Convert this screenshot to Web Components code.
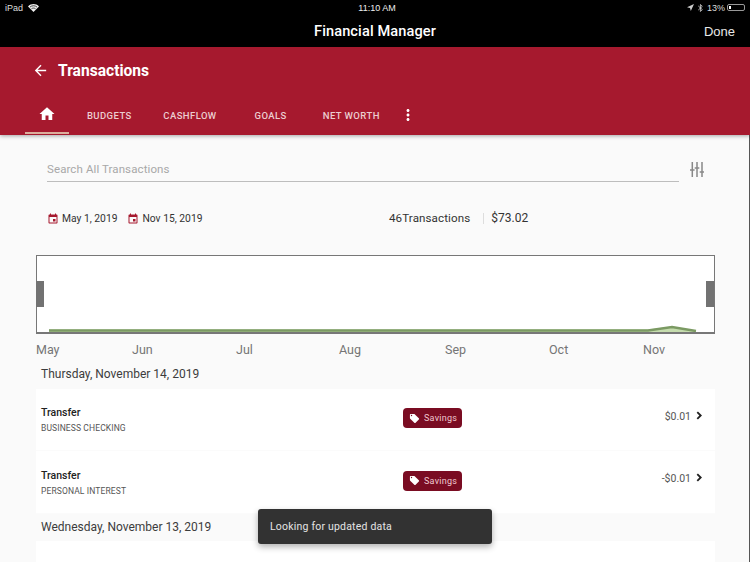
<!DOCTYPE html>
<html>
<head>
<meta charset="utf-8">
<title>Financial Manager</title>
<style>
  html, body { margin: 0; height: 562px; overflow: hidden; background: #fafafa; }
  body { font-family: Roboto, "Liberation Sans", sans-serif; position: relative; }
</style>
</head>
<body>
<ios-bar></ios-bar>
<app-header title="Transactions"></app-header>
<main-view>
  <search-row></search-row>
  <summary-row></summary-row>
  <range-chart></range-chart>
  <day-group label="Thursday, November 14, 2019">
    <txn-row name="Transfer" account="BUSINESS CHECKING" amount="$0.01" tag="Savings"></txn-row>
    <txn-row name="Transfer" account="PERSONAL INTEREST" amount="-$0.01" tag="Savings"></txn-row>
  </day-group>
  <day-group label="Wednesday, November 13, 2019">
    <txn-row></txn-row>
  </day-group>
</main-view>
<toast-msg>Looking for updated data</toast-msg>

<script>
const ICONS = {
  home: 'M10 20v-6h4v6h5v-8h3L12 3 2 12h3v8z',
  back: 'M20 11H7.83l5.59-5.59L12 4l-8 8 8 8 1.41-1.41L7.83 13H20v-2z',
  more: 'M12 8c1.1 0 2-.9 2-2s-.9-2-2-2-2 .9-2 2 .9 2 2 2zm0 2c-1.1 0-2 .9-2 2s.9 2 2 2 2-.9 2-2-.9-2-2-2zm0 6c-1.1 0-2 .9-2 2s.9 2 2 2 2-.9 2-2-.9-2-2-2z',
  event: 'M17 12h-5v5h5v-5zM16 1v2H8V1H6v2H5c-1.11 0-1.99.9-1.99 2L3 19c0 1.1.89 2 2 2h14c1.1 0 2-.9 2-2V5c0-1.1-.9-2-2-2h-1V1h-2zm3 18H5V8h14v11z',
  tag: 'M21.41 11.58l-9-9C12.05 2.22 11.55 2 11 2H4c-1.1 0-2 .9-2 2v7c0 .55.22 1.05.59 1.42l9 9c.36.36.86.58 1.41.58.55 0 1.05-.22 1.41-.59l7-7c.37-.36.59-.86.59-1.41 0-.55-.23-1.06-.59-1.42zM5.5 7C4.67 7 4 6.33 4 5.5S4.67 4 5.5 4 7 4.67 7 5.5 6.33 7 5.5 7z',
  chevron: 'M9.5 5.5L7.4 7.6 11.8 12l-4.4 4.4 2.1 2.1L16 12z'
};
const icon = (name, size, color) =>
  `<svg width="${size}" height="${size}" viewBox="0 0 24 24" fill="${color}" style="display:block;flex:none"><path d="${ICONS[name]}"/></svg>`;

class IosBar extends HTMLElement {
  connectedCallback() {
    this.attachShadow({ mode: 'open' }).innerHTML = `
      <style>
        :host { display: block; height: 47px; background: #000; color: #fff; font-family: "Liberation Sans", sans-serif; }
        .status { display: grid; grid-template-columns: 1fr auto 1fr; align-items: center; height: 15px; padding: 0 5px; font-size: 9px; color: #ddd; }
        .left, .right { display: flex; align-items: center; gap: 5px; }
        .right { justify-content: flex-end; gap: 4px; }
        .time { color: #eee; margin-left: 4px; }
        .nav { display: grid; grid-template-columns: 1fr auto 1fr; align-items: center; height: 32px; padding: 0 15px; }
        .title { font: 500 14.6px Roboto, sans-serif; color: #fff; letter-spacing: .1px; }
        .done { justify-self: end; font: 400 13px "Liberation Sans", sans-serif; color: #e8e8e8; }
        .batt { width: 18px; height: 7px; margin-left: -2px; border: 1px solid #999; border-radius: 2px; box-sizing: border-box; padding: 1px; }
        .batt i { display: block; width: 2px; height: 100%; background: #fff; }
      </style>
      <div class="status">
        <div class="left">iPad
          <svg width="11" height="8" viewBox="0 0 11 8"><path d="M5.5 8L0 2.4C3.2-.7 7.8-.7 11 2.4z" fill="#eee"/><path d="M1.9 3.1c2.1-1.8 5.1-1.8 7.2 0M3.5 4.7c1.2-.8 2.8-.8 4 0" stroke="#000" stroke-width=".7" fill="none"/></svg>
        </div>
        <div class="time">11:10 AM</div>
        <div class="right">
          <svg width="7" height="7" viewBox="0 0 7 7"><path d="M7 0L0 3.2l3 .8.8 3z" fill="#ccc"/></svg>
          <svg width="5" height="8" viewBox="0 0 5 8"><path d="M.3 2l4 3.6L2.4 7.5V.5l1.9 1.9-4 3.6" fill="none" stroke="#ddd" stroke-width=".8"/></svg>
          <span>13%</span>
          <div class="batt"><i></i></div>
        </div>
      </div>
      <div class="nav"><span></span><div class="title">Financial Manager</div><div class="done">Done</div></div>`;
  }
}

class AppHeader extends HTMLElement {
  connectedCallback() {
    const tabs = ['BUDGETS', 'CASHFLOW', 'GOALS', 'NET WORTH'];
    this.attachShadow({ mode: 'open' }).innerHTML = `
      <style>
        :host { display: block; height: 88px; background: #a6192e; color: #fff; box-shadow: 0 1px 4px rgba(0,0,0,.35); position: relative; }
        .top { display: flex; align-items: center; gap: 9px; height: 46px; padding-left: 32px; }
        h1 { margin: 1px 0 0; font: 700 15.6px Roboto, sans-serif; color: #fff; }
        .tabs { display: flex; height: 42px; padding-left: 25px; }
        .home, .tab, .more { height: 41px; padding-top: 3px; box-sizing: border-box; display: flex; align-items: center; justify-content: center; }
        .home { width: 44px; border-bottom: 2px solid #dcae9c; }
        .tab { width: 80.67px; font: 500 9.5px Roboto, sans-serif; letter-spacing: .42px; color: #eccdd0; }
        .more { width: 32px; }
      </style>
      <div class="top">${icon('back', 17, '#fff')}<h1>${this.getAttribute('title')}</h1></div>
      <div class="tabs">
        <div class="home">${icon('home', 18, '#fff')}</div>
        ${tabs.map(t => `<div class="tab">${t}</div>`).join('')}
        <div class="more">${icon('more', 18, '#fff')}</div>
      </div>`;
  }
}

class MainView extends HTMLElement {
  connectedCallback() {
    this.attachShadow({ mode: 'open' }).innerHTML = `
      <style>
        :host { display: block; box-sizing: border-box; height: 427px; padding: 0 34px 0 36px; border-right: 1px solid #555; overflow: hidden; }
      </style>
      <slot></slot>`;
  }
}

class SearchRow extends HTMLElement {
  connectedCallback() {
    this.attachShadow({ mode: 'open' }).innerHTML = `
      <style>
        :host { display: flex; align-items: flex-end; gap: 11px; height: 47px; padding-left: 11px; box-sizing: border-box; }
        .input { flex: 1; height: 22px; border-bottom: 1px solid #bdbdbd; font-size: 11.5px; line-height: 20px; color: #a8a8a8; letter-spacing: .1px; }
        svg { display: block; margin: 0 11px 5px 0; }
      </style>
      <div class="input">Search All Transactions</div>
      <svg width="14" height="15" viewBox="0 0 14 15" fill="none" stroke="#888" stroke-width="1.5">
        <path d="M2.3 0v15M7 0v15M12 0v15"/>
        <path d="M0 8h4.6M4.7 6h4.6M9.7 10h4.3" stroke-width="1.6"/>
      </svg>`;
  }
}

class SummaryRow extends HTMLElement {
  connectedCallback() {
    this.attachShadow({ mode: 'open' }).innerHTML = `
      <style>
        :host { display: grid; grid-template-columns: 353px auto auto auto; justify-content: start; align-items: center; height: 73px; box-sizing: border-box; font-size: 12px; color: #333; }
        .dates { display: flex; align-items: center; padding-left: 11px; font-size: 10.3px; color: #333; }
        .dates span { margin: 0 10px 0 3px; }
        .count, .total { margin-bottom: 1px; }
        .count { font-size: 11.6px; letter-spacing: .1px; }
        .sep { width: 1px; height: 11px; background: #ddd; margin: 0 7px 0 13px; }
      </style>
      <div class="dates">${icon('event', 12, '#a6192e')}<span>May 1, 2019</span>${icon('event', 12, '#a6192e')}<span>Nov 15, 2019</span></div>
      <div class="count">46Transactions</div>
      <div class="sep"></div>
      <div class="total">$73.02</div>`;
  }
}

class RangeChart extends HTMLElement {
  connectedCallback() {
    const months = ['May', 'Jun', 'Jul', 'Aug', 'Sep', 'Oct', 'Nov'];
    this.attachShadow({ mode: 'open' }).innerHTML = `
      <style>
        :host { display: block; }
        .plot { position: relative; height: 79px; width: 679px; box-sizing: border-box; border: 1px solid #777; border-bottom-width: 2px; background: #fff; }
        svg { position: absolute; left: 0; top: 0; display: block; }
        .handle { position: absolute; top: 25px; width: 8px; height: 26px; background: #727272; }
        .months { display: grid; grid-template-columns: 96px 104px 103px 106px 104px 94px auto; height: 27px; align-items: center; font-size: 12.5px; color: #757575; padding-top: 3px; box-sizing: border-box; }
      </style>
      <div class="plot">
        <svg width="677" height="76" viewBox="0 0 677 76">
          <path d="M12 76V73.5H611L635 70.5L659 74.5V76Z" fill="#c5dcae"/>
          <path d="M12 74.5H611L635 71L659 75" fill="none" stroke="#7b9a63" stroke-width="2.5"/>
        </svg>
        <div class="handle" style="left:-1px"></div>
        <div class="handle" style="right:0"></div>
      </div>
      <div class="months">${months.map(m => `<div>${m}</div>`).join('')}</div>`;
  }
}

class DayGroup extends HTMLElement {
  connectedCallback() {
    this.attachShadow({ mode: 'open' }).innerHTML = `
      <style>
        :host { display: block; }
        .label { height: 27.5px; line-height: 26px; padding-left: 5px; font-size: 12px; color: #3c3c3c; }
      </style>
      <div class="label">${this.getAttribute('label')}</div>
      <slot></slot>`;
  }
}

class TxnRow extends HTMLElement {
  connectedCallback() {
    const name = this.getAttribute('name');
    const tag = this.getAttribute('tag');
    this.attachShadow({ mode: 'open' }).innerHTML = `
      <style>
        :host { display: grid; grid-template-columns: 362px 59px 1fr; align-items: center; height: 62.5px; box-sizing: border-box; background: #fff; border-bottom: 1px solid #fbfbfb; padding: 0 8px 2px 5px; }
        .text { margin-top: 3px; }
        .name { font-size: 10.5px; font-weight: 500; color: #222; margin-bottom: 4px; }
        .acct { font-size: 8.5px; color: #555; letter-spacing: .12px; }
        .chip { display: flex; align-items: center; gap: 4px; height: 20px; padding-left: 6px; box-sizing: border-box; border-radius: 4px; background: #7a0c22; color: #f0c8d0; font-size: 9px; letter-spacing: .25px; }
        .chip.peek { align-self: start; height: 1px; margin: 20.5px 3px 0; padding: 0; background: #e2e0e0; }
        .amt { display: flex; justify-content: flex-end; align-items: center; gap: 1px; margin-bottom: 4px; font-size: 10.5px; color: #555; }
        .amt svg { margin-top: -2px; }
      </style>
      <div class="text">${name ? `<div class="name">${name}</div><div class="acct">${this.getAttribute('account')}</div>` : ''}</div>
      <div class="chip${tag ? '' : ' peek'}">${tag ? icon('tag', 11, '#fff') + `<span>${tag}</span>` : ''}</div>
      <div class="amt">${name ? this.getAttribute('amount') + icon('chevron', 15, '#222') : ''}</div>`;
  }
}

class ToastMsg extends HTMLElement {
  connectedCallback() {
    this.attachShadow({ mode: 'open' }).innerHTML = `
      <style>
        :host { position: absolute; left: 258px; top: 509px; width: 234px; height: 35px; box-sizing: border-box; padding-left: 12px; display: flex; align-items: center; background: #323232; border-radius: 3px; box-shadow: 0 3px 6px rgba(0,0,0,.3); color: #e4e4e4; font-size: 10.5px; letter-spacing: .2px; }
      </style>
      <slot></slot>`;
  }
}

customElements.define('ios-bar', IosBar);
customElements.define('app-header', AppHeader);
customElements.define('main-view', MainView);
customElements.define('search-row', SearchRow);
customElements.define('summary-row', SummaryRow);
customElements.define('range-chart', RangeChart);
customElements.define('day-group', DayGroup);
customElements.define('txn-row', TxnRow);
customElements.define('toast-msg', ToastMsg);
</script>
</body>
</html>
